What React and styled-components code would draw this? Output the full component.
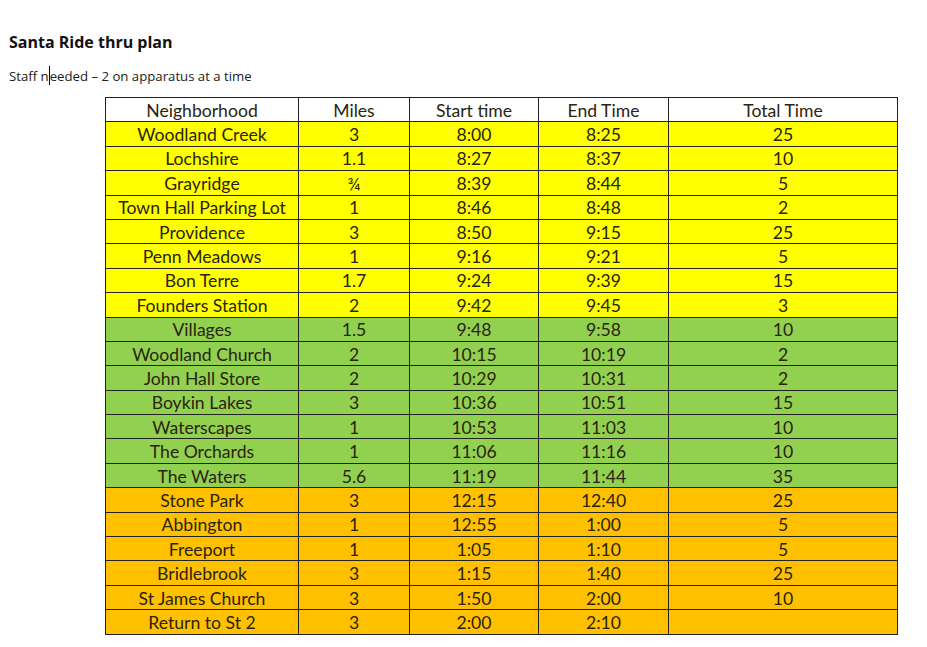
import React from 'react'
import styled, {createGlobalStyle} from 'styled-components'

const rows = [
    ['Woodland Creek', '3', '8:00', '8:25', '25', 'yellow'],
    ['Lochshire', '1.1', '8:27', '8:37', '10', 'yellow'],
    ['Grayridge', '¾', '8:39', '8:44', '5', 'yellow'],
    ['Town Hall Parking Lot', '1', '8:46', '8:48', '2', 'yellow'],
    ['Providence', '3', '8:50', '9:15', '25', 'yellow'],
    ['Penn Meadows', '1', '9:16', '9:21', '5', 'yellow'],
    ['Bon Terre', '1.7', '9:24', '9:39', '15', 'yellow'],
    ['Founders Station', '2', '9:42', '9:45', '3', 'yellow'],
    ['Villages', '1.5', '9:48', '9:58', '10', 'green'],
    ['Woodland Church', '2', '10:15', '10:19', '2', 'green'],
    ['John Hall Store', '2', '10:29', '10:31', '2', 'green'],
    ['Boykin Lakes', '3', '10:36', '10:51', '15', 'green'],
    ['Waterscapes', '1', '10:53', '11:03', '10', 'green'],
    ['The Orchards', '1', '11:06', '11:16', '10', 'green'],
    ['The Waters', '5.6', '11:19', '11:44', '35', 'green'],
    ['Stone Park', '3', '12:15', '12:40', '25', 'orange'],
    ['Abbington', '1', '12:55', '1:00', '5', 'orange'],
    ['Freeport', '1', '1:05', '1:10', '5', 'orange'],
    ['Bridlebrook', '3', '1:15', '1:40', '25', 'orange'],
    ['St James Church', '3', '1:50', '2:00', '10', 'orange'],
    ['Return to St 2', '3', '2:00', '2:10', '', 'orange'],
]

const fills = {
    yellow: '#ffff00',
    green: '#92d050',
    orange: '#ffc000',
    white: '#ffffff',
}

const App = () => {
    return (
        <Page>
            <GlobalStyle />
            <Title>Santa Ride thru plan</Title>
            <Note>Staff n<Caret />eeded – 2 on apparatus at a time</Note>
            <Plan>
                <colgroup>
                    <col style={{width: 193}} />
                    <col style={{width: 111}} />
                    <col style={{width: 129}} />
                    <col style={{width: 130}} />
                    <col style={{width: 229}} />
                </colgroup>
                <thead>
                    <tr>
                        <Cell as="th" fill="white">Neighborhood</Cell>
                        <Cell as="th" fill="white">Miles</Cell>
                        <Cell as="th" fill="white">Start time</Cell>
                        <Cell as="th" fill="white">End Time</Cell>
                        <Cell as="th" fill="white">Total Time</Cell>
                    </tr>
                </thead>
                <tbody>
                    {rows.map((r) => (
                        <tr key={r[0]}>
                            {r.slice(0, 5).map((v, i) => (
                                <Cell key={i} fill={r[5]}>{v}</Cell>
                            ))}
                        </tr>
                    ))}
                </tbody>
            </Plan>
        </Page>
    )
}

const GlobalStyle = createGlobalStyle`
    body {
        margin: 0;
        background: #fff;
        font-family: Lato, "Open Sans", sans-serif;
        color: #1c1c1c;
    }
`

const Page = styled.div`
    padding: 33px 0 0 9px;
    width: 927px;
    height: 647px;
    box-sizing: border-box;
`
const Title = styled.h1`
    margin: 0;
    font-size: 16px;
    line-height: 18px;
    font-weight: 700;
    font-family: "Open Sans", Lato, sans-serif;
    color: #111;
`
const Note = styled.p`
    margin: 15px 0 0;
    font-size: 13.2px;
    line-height: 16px;
    font-family: "Open Sans", Lato, sans-serif;
    color: #222;
`
const Caret = styled.span`
    display: inline-block;
    width: 0;
    height: 19px;
    vertical-align: -4px;
    border-left: 1px solid #000;
`
const Plan = styled.table`
    margin: 12px 0 0 96px;
    border-collapse: collapse;
    table-layout: fixed;
    width: 792px;
`
const Cell = styled.td`
    background: ${(p) => fills[p.fill]};
    border: 1px solid #222;
    height: 24.4px;
    padding: 2px 0 0;
    box-sizing: border-box;
    text-align: center;
    font-size: 17.6px;
    font-weight: 400;
    line-height: 20px;
    color: #2a2410;
    white-space: nowrap;
`

export default App
